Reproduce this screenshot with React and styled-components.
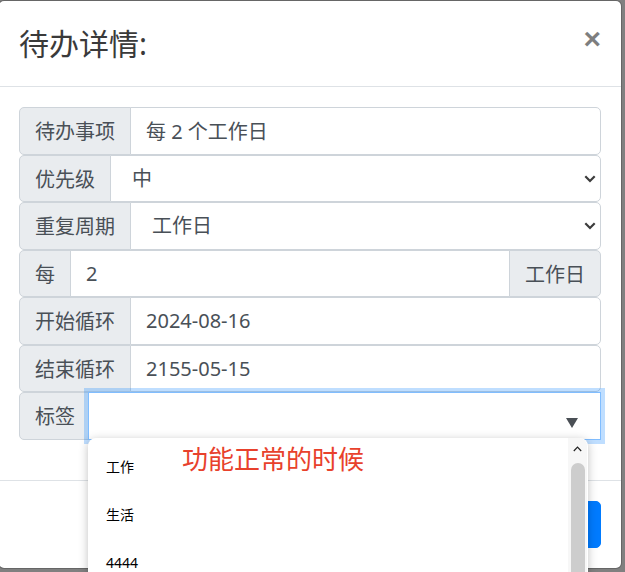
import React from 'react';
import styled, { createGlobalStyle } from 'styled-components';

const FONT = '"Noto Sans", "Noto Sans CJK SC", sans-serif';

const ROWS = [
  { label: '待办事项', kind: 'input', value: '每 2 个工作日' },
  { label: '优先级', kind: 'select', value: '中' },
  { label: '重复周期', kind: 'select', value: '工作日' },
  { label: '每', kind: 'input', value: '2', append: '工作日' },
  { label: '开始循环', kind: 'input', value: '2024-08-16' },
  { label: '结束循环', kind: 'input', value: '2155-05-15' },
];

const TAGS = ['工作', '生活', '4444'];

const GlobalStyle = createGlobalStyle`
  html, body {
    margin: 0;
    padding: 0;
    background: #808080;
  }
  body {
    width: 625px;
    height: 572px;
    overflow: hidden;
    font-family: ${FONT};
  }
  * { box-sizing: border-box; }
`;

export default function App() {
  return (
    <>
      <GlobalStyle />
      <Modal>
        <Header>
          <Title>待办详情:</Title>
          <Close type="button">×</Close>
        </Header>

        <Body>
          {ROWS.map(row => (
            <Group key={row.label}>
              <Addon>{row.label}</Addon>
              {row.kind === 'select' ? (
                <SelectWrap>
                  <Select defaultValue={row.value}>
                    <option>{row.value}</option>
                  </Select>
                  <Chevron width="12" height="8" viewBox="0 0 12 8">
                    <path d="M1.3 1.3 L6 6 L10.7 1.3" fill="none" stroke="#3c3c3c" strokeWidth="2.2" />
                  </Chevron>
                </SelectWrap>
              ) : (
                <Input defaultValue={row.value} $last={!row.append} />
              )}
              {row.append && <Addon $append>{row.append}</Addon>}
            </Group>
          ))}

          <Group $last>
            <Addon>标签</Addon>
            <TagField>
              <Indicator width="12" height="10" viewBox="0 0 12 10">
                <path d="M0 0 H12 L6 10 Z" fill="#4a4f55" />
              </Indicator>
              <Popup>
                {TAGS.map(tag => (
                  <Option key={tag}>{tag}</Option>
                ))}
                <Scrollbar>
                  <Caret width="9" height="6" viewBox="0 0 9 6">
                    <path d="M0.8 5 L4.5 1.2 L8.2 5" fill="none" stroke="#222" strokeWidth="1.2" />
                  </Caret>
                  <Thumb />
                </Scrollbar>
                <Note>功能正常的时候</Note>
              </Popup>
            </TagField>
          </Group>
        </Body>

        <Footer>
          <Button type="button">保存</Button>
        </Footer>
      </Modal>
    </>
  );
}

const Modal = styled.div`
  position: relative;
  margin-left: -2px;
  width: 624px;
  background: #fff;
  background-clip: padding-box;
  border: 1px solid rgba(0, 0, 0, 0.2);
  border-radius: 6px;
`;

const Header = styled.div`
  display: flex;
  align-items: flex-start;
  justify-content: space-between;
  padding: 20px;
  border-bottom: 1px solid #dee2e6;
`;

const Title = styled.h4`
  margin: 0;
  font-size: 30px;
  line-height: 45px;
  font-weight: 400;
  color: #3a3a3a;
`;

const Close = styled.button`
  margin-top: 3px;
  padding: 0;
  border: 0;
  background: transparent;
  font-family: "Liberation Sans", Arial, sans-serif;
  font-size: 30px;
  font-weight: 700;
  line-height: 1;
  color: #000;
  opacity: 0.5;
  text-shadow: 0 1px 0 #fff;
`;

const Body = styled.div`
  padding: 20px;
`;

const Group = styled.div`
  display: flex;
  height: 47.5px;
  margin-bottom: ${({ $last }) => ($last ? '20px' : '0')};
`;

const Addon = styled.span`
  display: flex;
  align-items: center;
  padding: 0 15px;
  font-size: 20px;
  color: #495057;
  white-space: nowrap;
  background: #e9ecef;
  border: 1px solid #ced4da;
  border-radius: ${({ $append }) => ($append ? '0 5px 5px 0' : '5px 0 0 5px')};
  margin-left: ${({ $append }) => ($append ? '-1px' : '0')};
`;

const Input = styled.input`
  flex: 1;
  min-width: 0;
  height: 100%;
  margin-left: -1px;
  padding: 0 15px;
  font-family: ${FONT};
  font-size: 20px;
  color: #495057;
  background: #fff;
  border: 1px solid #ced4da;
  border-radius: ${({ $last }) => ($last ? '0 5px 5px 0' : '0')};
  outline: none;
`;

const SelectWrap = styled.div`
  position: relative;
  flex: 1;
  margin-left: -1px;
`;

const Select = styled.select`
  width: 100%;
  height: 100%;
  padding: 0 30px 0 21px;
  font-family: ${FONT};
  font-size: 20px;
  color: #495057;
  background: #fff;
  border: 1px solid #ced4da;
  border-radius: 0 5px 5px 0;
  appearance: none;
  outline: none;
`;

const Chevron = styled.svg`
  position: absolute;
  right: 5px;
  top: 20px;
  pointer-events: none;
`;

const TagField = styled.div`
  position: relative;
  z-index: 1;
  flex: 1;
  margin-left: -3px;
  background: #fff;
  border: 1px solid #80bdff;
  box-shadow: 0 0 0 4px rgba(0, 123, 255, 0.25);
`;

const Indicator = styled.svg`
  position: absolute;
  right: 22px;
  top: 25px;
`;

const Popup = styled.div`
  position: absolute;
  left: -1px;
  top: 45px;
  width: 500px;
  height: 160px;
  padding-top: 5px;
  background: #fff;
  border-radius: 8px 8px 0 0;
  box-shadow: 0 2px 10px rgba(0, 0, 0, 0.25);
`;

const Option = styled.div`
  height: 48px;
  line-height: 48px;
  padding-left: 18px;
  font-size: 14px;
  color: #000;
`;

const Scrollbar = styled.div`
  position: absolute;
  top: 0;
  right: 1px;
  bottom: 0;
  width: 19px;
  background: #f7f7f7;
  border-radius: 0 8px 0 0;
`;

const Caret = styled.svg`
  position: absolute;
  top: 8px;
  left: 5px;
`;

const Thumb = styled.div`
  position: absolute;
  top: 25px;
  left: 3px;
  width: 14px;
  height: 200px;
  background: #cdcdcd;
  border-radius: 7px;
`;

const Note = styled.div`
  position: absolute;
  left: 94px;
  top: 6px;
  font-size: 26px;
  line-height: 30px;
  color: #e8412c;
  white-space: nowrap;
`;

const Footer = styled.div`
  display: flex;
  justify-content: flex-end;
  padding: 15px;
  border-top: 1px solid #dee2e6;
`;

const Button = styled.button`
  margin: 5px;
  height: 47.5px;
  padding: 0 15px;
  font-family: ${FONT};
  font-size: 20px;
  color: #fff;
  background: #007bff;
  border: 1px solid #007bff;
  border-radius: 5px;
`;
